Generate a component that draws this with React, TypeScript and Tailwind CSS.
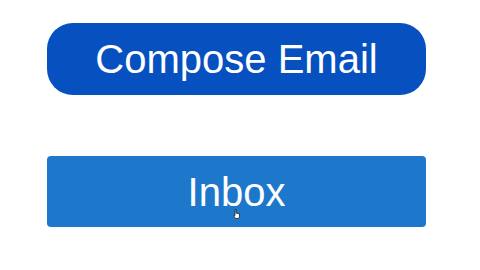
export default function App() {
  return (
    <div className="w-[480px] h-[270px] bg-white flex flex-col pl-[47px] pt-[23px]" style={{ fontFamily: '"Liberation Sans", Arial, sans-serif' }}>
      <button className="w-[379px] h-[72px] rounded-[26px] bg-[#0650c0] text-white text-[40px] leading-none flex items-center justify-center">
        Compose Email
      </button>
      <div className="relative mt-[61px] w-[379px]">
        <button className="w-[379px] h-[71px] rounded-[4px] bg-[#1d78cb] text-white text-[40px] leading-none flex items-center justify-center">
          Inbox
        </button>
        <svg className="absolute left-[186px] top-[53px]" width="8" height="10" viewBox="0 0 8 10">
          <path d="M2 0.5 L3 0.5 L3 4 L6.5 5 L6.5 8 L5 9.5 L2.5 9.5 L0.8 7 L1 6 L2 6.5 Z" fill="white" stroke="#222" strokeWidth="0.8" />
        </svg>
      </div>
    </div>
  );
}
